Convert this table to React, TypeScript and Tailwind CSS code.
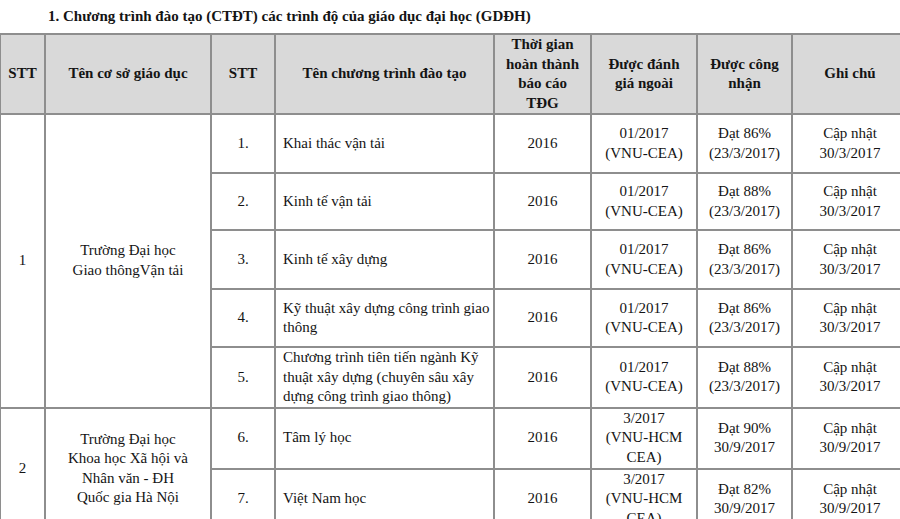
const serif = 'font-[Liberation_Serif,Times_New_Roman,serif]'

type Row = {
  no: string
  name: string[]
  year: string
  eval: string[]
  accred: string[]
  note: string[]
  h: string
}

const GROUPS: { stt: string; school: string[]; rows: Row[] }[] = [
  {
    stt: '1',
    school: ['Trường Đại học', 'Giao thôngVận tải'],
    rows: [
      { no: '1.', name: ['Khai thác vận tải'], year: '2016', eval: ['01/2017', '(VNU-CEA)'], accred: ['Đạt 86%', '(23/3/2017)'], note: ['Cập nhật', '30/3/2017'], h: 'h-[59px]' },
      { no: '2.', name: ['Kinh tế vận tải'], year: '2016', eval: ['01/2017', '(VNU-CEA)'], accred: ['Đạt 88%', '(23/3/2017)'], note: ['Cập nhật', '30/3/2017'], h: 'h-[57px]' },
      { no: '3.', name: ['Kinh tế xây dựng'], year: '2016', eval: ['01/2017', '(VNU-CEA)'], accred: ['Đạt 86%', '(23/3/2017)'], note: ['Cập nhật', '30/3/2017'], h: 'h-[59px]' },
      { no: '4.', name: ['Kỹ thuật xây dựng công trình giao', 'thông'], year: '2016', eval: ['01/2017', '(VNU-CEA)'], accred: ['Đạt 86%', '(23/3/2017)'], note: ['Cập nhật', '30/3/2017'], h: 'h-[58px]' },
      { no: '5.', name: ['Chương trình tiên tiến ngành Kỹ', 'thuật xây dựng (chuyên sâu xây', 'dựng công trình giao thông)'], year: '2016', eval: ['01/2017', '(VNU-CEA)'], accred: ['Đạt 88%', '(23/3/2017)'], note: ['Cập nhật', '30/3/2017'], h: 'h-[60px]' },
    ],
  },
  {
    stt: '2',
    school: ['Trường Đại học', 'Khoa học Xã hội và', 'Nhân văn - ĐH', 'Quốc gia Hà Nội'],
    rows: [
      { no: '6.', name: ['Tâm lý học'], year: '2016', eval: ['3/2017', '(VNU-HCM', 'CEA)'], accred: ['Đạt 90%', '30/9/2017'], note: ['Cập nhật', '30/9/2017'], h: 'h-[61px]' },
      { no: '7.', name: ['Việt Nam học'], year: '2016', eval: ['3/2017', '(VNU-HCM', 'CEA)'], accred: ['Đạt 82%', '30/9/2017'], note: ['Cập nhật', '30/9/2017'], h: 'h-[61px]' },
    ],
  },
]

const cell = 'border-2 border-[#8e8e8e] align-middle p-0'

function Lines({ lines }: { lines: string[] }) {
  return (
    <>
      {lines.map((l, i) => (
        <div key={i}>{l}</div>
      ))}
    </>
  )
}

export default function App() {
  return (
    <div className={`w-[900px] h-[519px] overflow-hidden bg-white text-[#141414] ${serif} text-[15px] leading-[19.5px]`}>
      <div className="h-[33px] flex items-center pl-[48px] font-bold">
        1. Chương trình đào tạo (CTĐT) các trình độ của giáo dục đại học (GDĐH)
      </div>
      <table className="table-fixed border-collapse w-[908px] -ml-[1px]">
        <colgroup>
          <col className="w-[45px]" />
          <col className="w-[166px]" />
          <col className="w-[64px]" />
          <col className="w-[219px]" />
          <col className="w-[97px]" />
          <col className="w-[106px]" />
          <col className="w-[95px]" />
          <col className="w-[116px]" />
        </colgroup>
        <thead>
          <tr className="bg-[#d9d9d9] font-bold text-center">
            <th className={`${cell} h-[80px]`}>STT</th>
            <th className={cell}>Tên cơ sở giáo dục</th>
            <th className={cell}>STT</th>
            <th className={cell}>Tên chương trình đào tạo</th>
            <th className={cell}>
              <Lines lines={['Thời gian', 'hoàn thành', 'báo cáo', 'TĐG']} />
            </th>
            <th className={cell}>
              <Lines lines={['Được đánh', 'giá ngoài']} />
            </th>
            <th className={cell}>
              <Lines lines={['Được công', 'nhận']} />
            </th>
            <th className={cell}>Ghi chú</th>
          </tr>
        </thead>
        <tbody>
          {GROUPS.map((g) =>
            g.rows.map((r, i) => (
              <tr key={r.no} className="text-center">
                {i === 0 && (
                  <>
                    <td rowSpan={g.rows.length} className={cell}>{g.stt}</td>
                    <td rowSpan={g.rows.length} className={cell}>
                      <Lines lines={g.school} />
                    </td>
                  </>
                )}
                <td className={`${cell} ${r.h}`}>{r.no}</td>
                <td className={`${cell} text-left pl-[7px]`}>
                  <Lines lines={r.name} />
                </td>
                <td className={cell}>{r.year}</td>
                <td className={cell}>
                  <Lines lines={r.eval} />
                </td>
                <td className={cell}>
                  <Lines lines={r.accred} />
                </td>
                <td className={cell}>
                  <Lines lines={r.note} />
                </td>
              </tr>
            ))
          )}
        </tbody>
      </table>
    </div>
  )
}
